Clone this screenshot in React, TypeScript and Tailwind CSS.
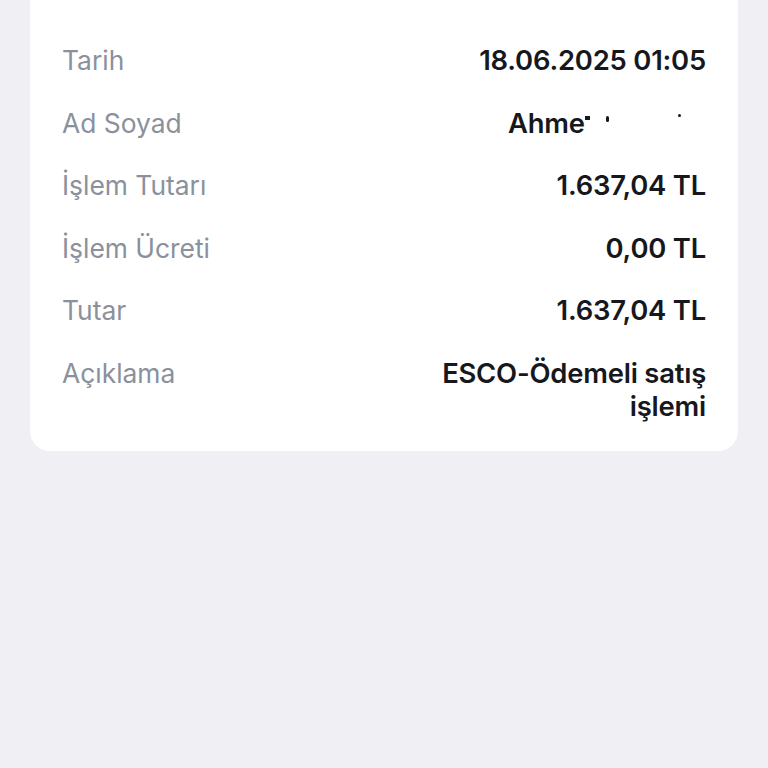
const ROWS: { label: string; value: React.ReactNode }[] = [
  { label: "Tarih", value: "18.06.2025 01:05" },
  {
    label: "Ad Soyad",
    value: (
      <span className="relative inline-block w-[198px] text-left">
        Ahme
        <span className="absolute top-[9px] left-[77px] h-[4px] w-[5px] bg-[#16181d]" />
        <span className="absolute top-[9px] left-[98px] h-[6px] w-[3px] rounded-full bg-[#16181d]" />
        <span className="absolute top-[7px] left-[170px] h-[3px] w-[3px] rounded-full bg-[#16181d]" />
      </span>
    ),
  },
  { label: "İşlem Tutarı", value: "1.637,04 TL" },
  { label: "İşlem Ücreti", value: "0,00 TL" },
  { label: "Tutar", value: "1.637,04 TL" },
  { label: "Açıklama", value: "ESCO-Ödemeli satış işlemi" },
];

export default function App() {
  return (
    <div
      className="min-h-[768px] bg-[#efeff4] px-[30px]"
      style={{ fontFamily: "Inter, 'Noto Sans', sans-serif" }}
    >
      <div className="flex flex-col gap-[29.5px] rounded-b-[20px] bg-white px-[32px] pt-[44px] pb-[28px]">
        {ROWS.map((row) => (
          <div key={row.label} className="flex items-start justify-between gap-6">
            <span className="shrink-0 text-[26.4px] leading-[33px] text-[#8a919c]">
              {row.label}
            </span>
            <span className="max-w-[300px] text-right text-[27.4px] font-semibold leading-[33px] tracking-[-0.2px] text-[#16181d]">
              {row.value}
            </span>
          </div>
        ))}
      </div>
    </div>
  );
}
